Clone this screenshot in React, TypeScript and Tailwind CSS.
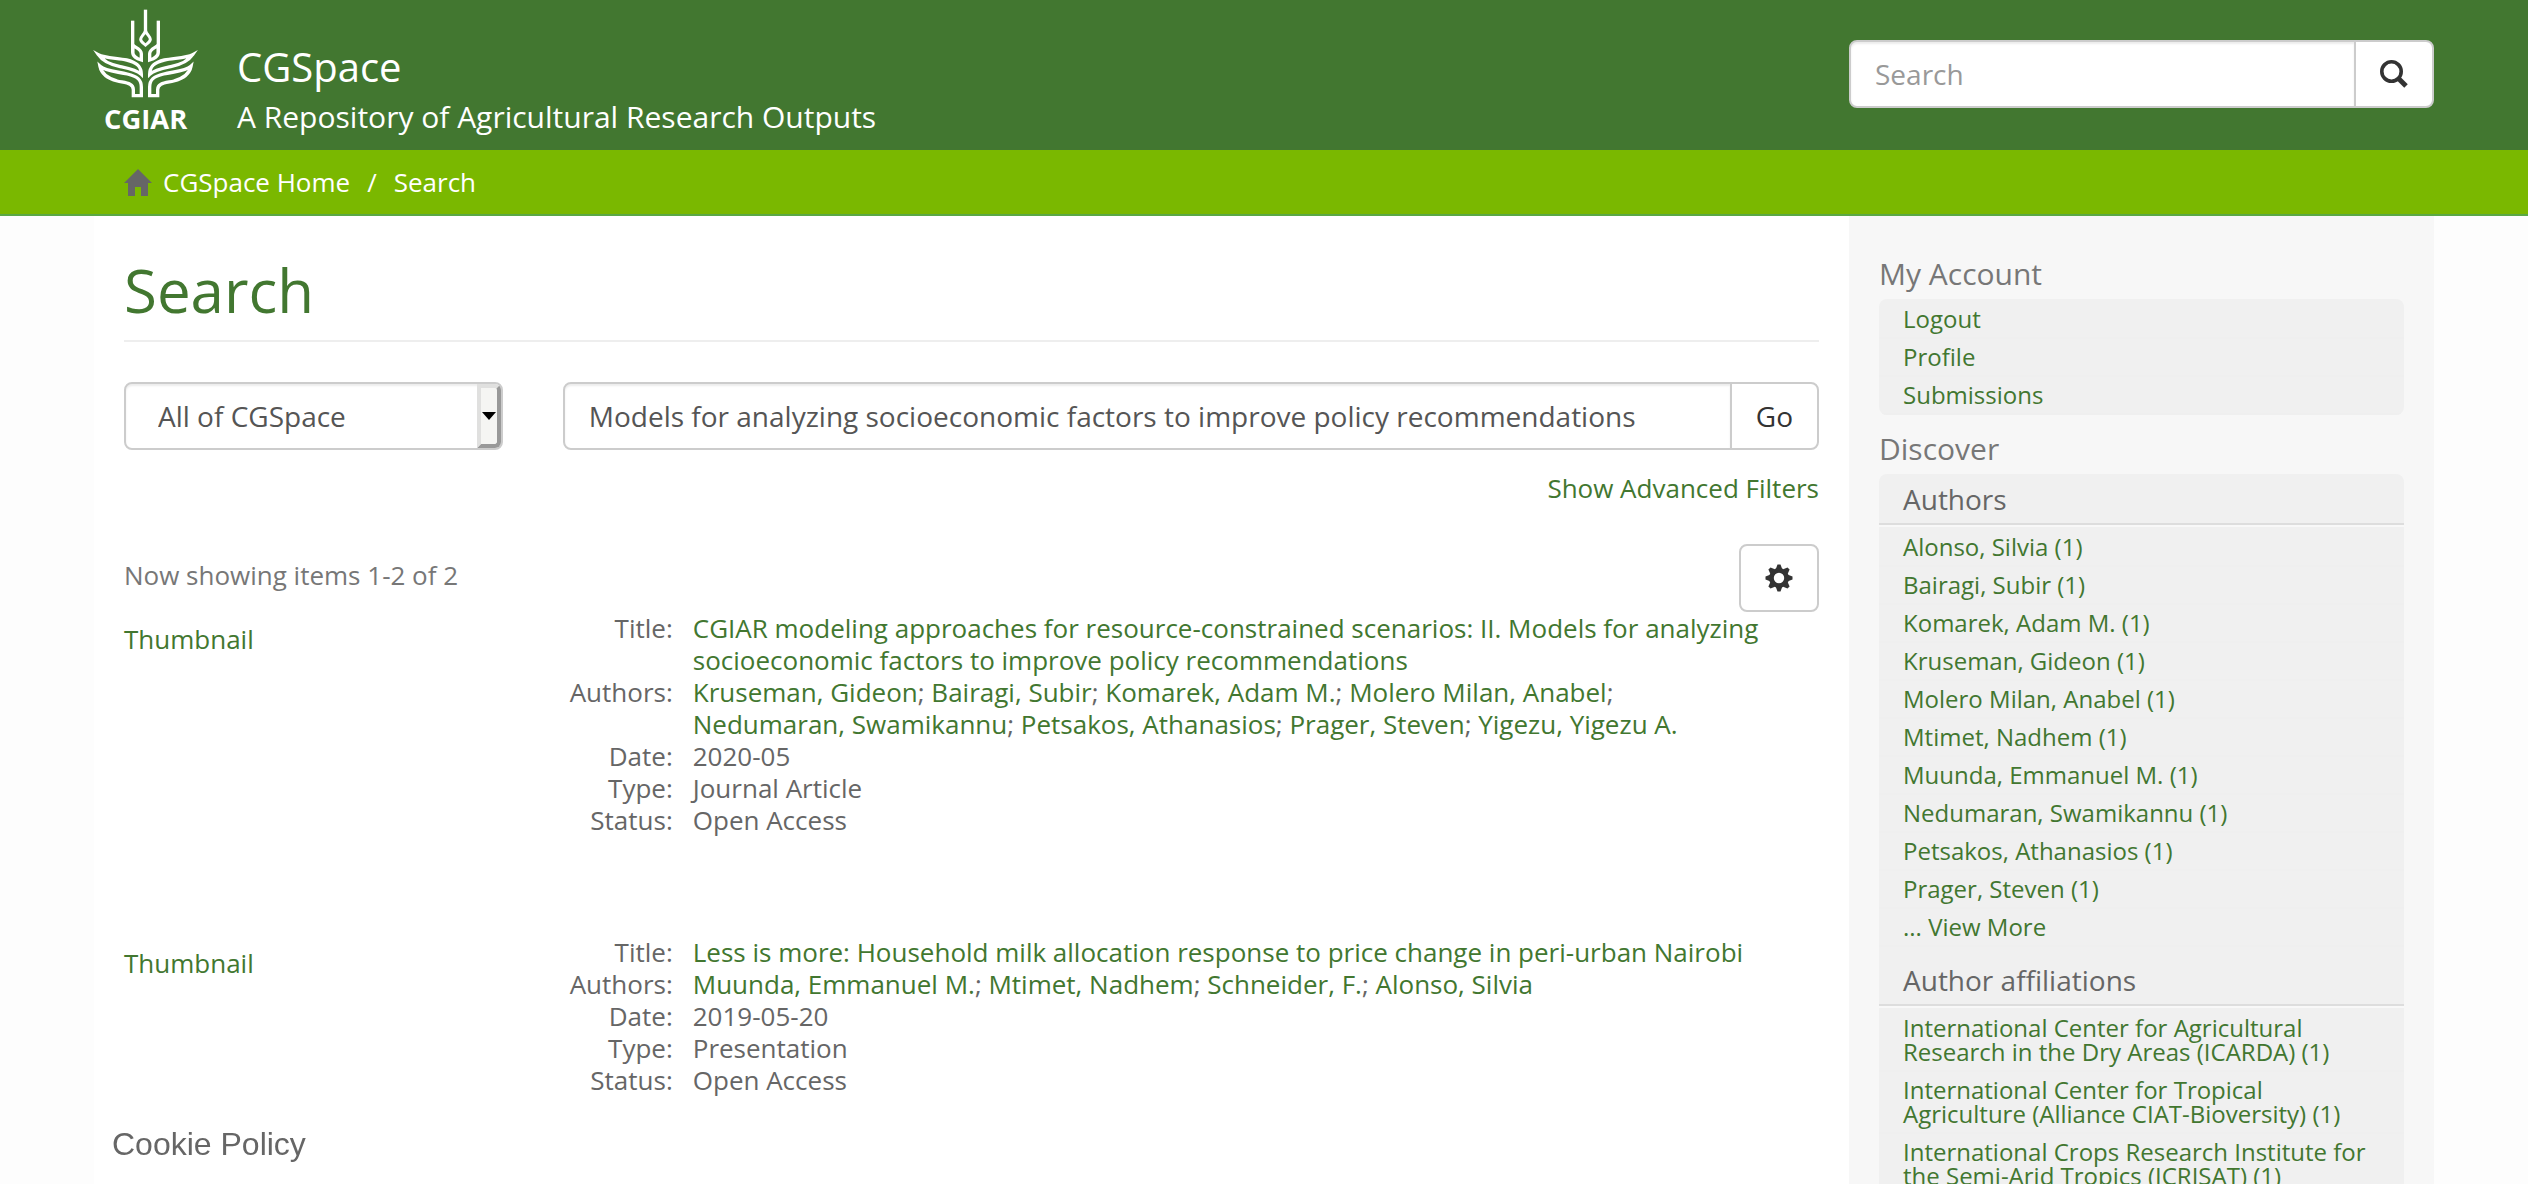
import React from "react";

const authors = [
  "Alonso, Silvia (1)",
  "Bairagi, Subir (1)",
  "Komarek, Adam M. (1)",
  "Kruseman, Gideon (1)",
  "Molero Milan, Anabel (1)",
  "Mtimet, Nadhem (1)",
  "Muunda, Emmanuel M. (1)",
  "Nedumaran, Swamikannu (1)",
  "Petsakos, Athanasios (1)",
  "Prager, Steven (1)",
  "... View More",
];

const affiliations = [
  "International Center for Agricultural Research in the Dry Areas (ICARDA) (1)",
  "International Center for Tropical Agriculture (Alliance CIAT-Bioversity) (1)",
  "International Crops Research Institute for the Semi-Arid Tropics (ICRISAT) (1)",
];

type Item = { title: string; authors: string[]; date: string; type: string; status: string };

const results: Item[] = [
  {
    title:
      "CGIAR modeling approaches for resource-constrained scenarios: II. Models for analyzing socioeconomic factors to improve policy recommendations",
    authors: [
      "Kruseman, Gideon",
      "Bairagi, Subir",
      "Komarek, Adam M.",
      "Molero Milan, Anabel",
      "Nedumaran, Swamikannu",
      "Petsakos, Athanasios",
      "Prager, Steven",
      "Yigezu, Yigezu A.",
    ],
    date: "2020-05",
    type: "Journal Article",
    status: "Open Access",
  },
  {
    title: "Less is more: Household milk allocation response to price change in peri-urban Nairobi",
    authors: ["Muunda, Emmanuel M.", "Mtimet, Nadhem", "Schneider, F.", "Alonso, Silvia"],
    date: "2019-05-20",
    type: "Presentation",
    status: "Open Access",
  },
];

function WingHalf() {
  return (
    <g strokeWidth="10">
      <path d="M128 63V158" />
      <path d="M128 136C136 144 154 148 154 162V181C142 177 128 172 128 156Z" />
      <path d="M25 165C44 175 82 175 110 181C140 188 154 200 154 224C138 209 112 205 88 200C58 194 38 184 25 165Z" />
      <path d="M30 200C46 215 84 216 112 223C142 230 154 240 154 262V288H130V270C130 250 108 250 82 244C52 236 34 220 30 200Z" />
    </g>
  );
}

function Logo() {
  return (
    <svg viewBox="12 28 309 366" className="h-[122px] w-[103px] overflow-visible" role="img" aria-label="CGIAR">
      <g fill="none" stroke="#fff" strokeLinejoin="miter" strokeMiterlimit="8">
        <path d="M166.500 30V96" strokeWidth="10" />
        <path d="M166.500 93C162 106 152 110 152 119C152 127 160 131 166.500 136C173 131 181 127 181 119C181 110 171 106 166.500 93Z" strokeWidth="9" />
        <WingHalf />
        <g transform="translate(333 0) scale(-1 1)">
          <WingHalf />
        </g>
      </g>
      <text x="167" y="388" textAnchor="middle" fill="#fff" fontFamily="Open Sans, sans-serif" fontWeight="700" fontSize="82">
        CGIAR
      </text>
    </svg>
  );
}

function HomeIcon() {
  return (
    <svg viewBox="0 0 28 27" className="h-[27px] w-7" fill="#666" aria-hidden="true">
      <path d="M14 0L28 14H24V27H17V18H11V27H4V14H0Z" />
    </svg>
  );
}

function SearchIcon() {
  return (
    <svg viewBox="0 0 28 28" className="size-7" fill="none" stroke="#333" aria-hidden="true">
      <circle cx="11.500" cy="11.500" r="9.700" strokeWidth="3.600" />
      <path d="M18 18L26 26" strokeWidth="5" />
    </svg>
  );
}

const teeth = [0, 45, 90, 135, 180, 225, 270, 315];

function CogIcon() {
  return (
    <svg viewBox="-14 -14 28 28" className="size-7" fill="#333" aria-hidden="true">
      <circle r="7.600" fill="none" stroke="#333" strokeWidth="4.800" />
      {teeth.map((a) => (
        <path key={a} d="M-3.200 -9L-1.500 -13.500H1.500L3.200 -9Z" transform={`rotate(${a})`} />
      ))}
    </svg>
  );
}

const link = "text-[#427730] hover:underline";

function Result({ item }: { item: Item }) {
  return (
    <article className="-mx-[30px] flex items-start text-[26px] leading-8 text-[#666]">
      <div className="w-1/4 shrink-0 px-[30px] pt-[11px]">
        <a href="#" className={link}>
          Thumbnail
        </a>
      </div>
      <dl className="grid flex-1 grid-cols-[110px_1fr] gap-x-5 px-[30px]">
        <dt className="text-right">Title:</dt>
        <dd>
          <a href="#" className={link}>
            {item.title}
          </a>
        </dd>
        <dt className="text-right">Authors:</dt>
        <dd>
          {item.authors.map((name, i) => (
            <React.Fragment key={name}>
              {i > 0 && "; "}
              <a href="#" className="whitespace-nowrap text-[#427730] hover:underline">
                {name}
              </a>
            </React.Fragment>
          ))}
        </dd>
        <dt className="text-right">Date:</dt>
        <dd>{item.date}</dd>
        <dt className="text-right">Type:</dt>
        <dd>{item.type}</dd>
        <dt className="text-right">Status:</dt>
        <dd>{item.status}</dd>
      </dl>
    </article>
  );
}

function LinkList({ items }: { items: string[] }) {
  return (
    <ul className="pt-0.5 text-2xl leading-6">
      {items.map((t) => (
        <li key={t} className="border-b-2 border-[#efefef] px-6 py-1.5">
          <a href="#" className={link}>
            {t}
          </a>
        </li>
      ))}
    </ul>
  );
}

function FacetTitle({ children }: { children: React.ReactNode }) {
  return (
    <h3 className="border-b-2 border-[#dddddd] px-6 pt-[9px] pb-[7px] text-[28px] leading-[33px] text-[#666] shadow-[0_2px_0_#f8f8f8]">
      {children}
    </h3>
  );
}

export default function App() {
  return (
    <div className="h-screen overflow-hidden bg-[#fdfdfd] font-['Open_Sans',sans-serif] text-[#666]">
      <header className="bg-[#427730] text-white">
        <div className="mx-auto flex h-[150px] max-w-[2340px] items-start">
          <div className="flex w-3/4 items-start gap-10">
            <a href="#" className="pt-[9px]">
              <Logo />
            </a>
            <div className="pt-[45px]">
              <div className="text-[40px] leading-[44px]">CGSpace</div>
              <div className="pt-2 text-[30px] leading-10">A Repository of Agricultural Research Outputs</div>
            </div>
          </div>
          <form className="flex w-1/4 pt-10" onSubmit={(e) => e.preventDefault()}>
            <input
              type="text"
              aria-label="Search"
              placeholder="Search"
              className="h-[68px] min-w-0 flex-1 rounded-l-lg border-2 border-[#cccccc] bg-white px-6 text-[28px] text-[#555] shadow-[inset_0_2px_2px_rgba(0,0,0,0.075)] placeholder:text-[#999]"
            />
            <button
              type="submit"
              aria-label="Submit search"
              className="-ml-0.5 flex h-[68px] w-20 items-center justify-center rounded-r-lg border-2 border-[#cccccc] bg-white"
            >
              <SearchIcon />
            </button>
          </form>
        </div>
      </header>

      <nav aria-label="Breadcrumb" className="border-b-2 border-[#5aa845] bg-[#7ab800]">
        <ol className="mx-auto flex h-16 max-w-[2340px] items-center px-[30px] text-[26px] leading-9 text-white">
          <li className="flex items-center gap-[11px]">
            <HomeIcon />
            <a href="#">CGSpace Home</a>
          </li>
          <li className="px-[17px]" aria-hidden="true">
            /
          </li>
          <li>Search</li>
        </ol>
      </nav>

      <div className="mx-auto flex max-w-[2340px] items-stretch">
        <main className="w-3/4 bg-white px-[30px] pt-10">
          <h1 className="border-b-2 border-[#eeeeee] pb-4 text-[60px] leading-[68px] text-[#427730]">Search</h1>

          <form className="-mx-[30px] flex pt-10" onSubmit={(e) => e.preventDefault()}>
            <div className="w-1/4 px-[30px]">
              <div className="relative">
                <select
                  aria-label="Scope"
                  className="h-[68px] w-full appearance-none rounded-lg border-2 border-[#cccccc] bg-white pr-9 pl-8 text-[28px] text-[#555] shadow-[inset_0_2px_2px_rgba(0,0,0,0.075)]"
                >
                  <option>All of CGSpace</option>
                </select>
                <span className="pointer-events-none absolute inset-y-0.5 right-0.5 flex w-6 items-center justify-center rounded-r-md border-4 border-t-[#e0e0df] border-r-[#999999] border-b-[#999999] border-l-[#e0e0df] bg-[#f5f5f3]">
                  <svg viewBox="0 0 14 8" className="h-2 w-3.5 shrink-0" aria-hidden="true">
                    <path d="M0 0H14L7 8Z" fill="#000" />
                  </svg>
                </span>
              </div>
            </div>
            <div className="flex flex-1 px-[30px]">
              <input
                type="text"
                aria-label="Query"
                defaultValue="Models for analyzing socioeconomic factors to improve policy recommendations"
                className="h-[68px] min-w-0 flex-1 rounded-l-lg border-2 border-[#cccccc] bg-white px-6 text-[28px] text-[#555] shadow-[inset_0_2px_2px_rgba(0,0,0,0.075)]"
              />
              <button
                type="submit"
                className="-ml-0.5 h-[68px] rounded-r-lg border-2 border-[#cccccc] bg-white px-6 text-[28px] text-[#333]"
              >
                Go
              </button>
            </div>
          </form>

          <div className="flex justify-end pt-5 text-[26px] leading-9">
            <a href="#" className={link}>
              Show Advanced Filters
            </a>
          </div>

          <div className="flex items-start justify-between pt-[38px]">
            <p className="pt-[13px] text-[26px] leading-9 text-[#777]">Now showing items 1-2 of 2</p>
            <button
              type="button"
              aria-label="Settings"
              className="flex h-[68px] w-20 items-center justify-center rounded-lg border-2 border-[#cccccc] bg-white"
            >
              <CogIcon />
            </button>
          </div>

          <div className="flex flex-col gap-[100px]">
            {results.map((r) => (
              <Result key={r.date} item={r} />
            ))}
          </div>
        </main>

        <aside className="w-1/4 bg-[#f7f7f7] px-[30px] pt-[41px]">
          <h2 className="text-[30px] leading-[33px] text-[#777]">My Account</h2>
          <div className="mt-[9px] overflow-hidden rounded-lg bg-[#f0f0f0]">
            <LinkList items={["Logout", "Profile", "Submissions"]} />
          </div>
          <h2 className="pt-[17px] text-[30px] leading-[33px] text-[#777]">Discover</h2>
          <div className="mt-[9px] overflow-hidden rounded-lg bg-[#f0f0f0]">
            <FacetTitle>Authors</FacetTitle>
            <div className="pt-0.5">
              <LinkList items={authors} />
            </div>
            <div className="pt-2">
              <FacetTitle>Author affiliations</FacetTitle>
            </div>
            <div className="pt-0.5">
              <LinkList items={affiliations} />
            </div>
          </div>
        </aside>
      </div>

      <div className="fixed bottom-0 left-0 px-28 pb-[22px] font-['Liberation_Sans',sans-serif] text-[32px] leading-9">
        <a href="#">Cookie Policy</a>
      </div>
    </div>
  );
}
